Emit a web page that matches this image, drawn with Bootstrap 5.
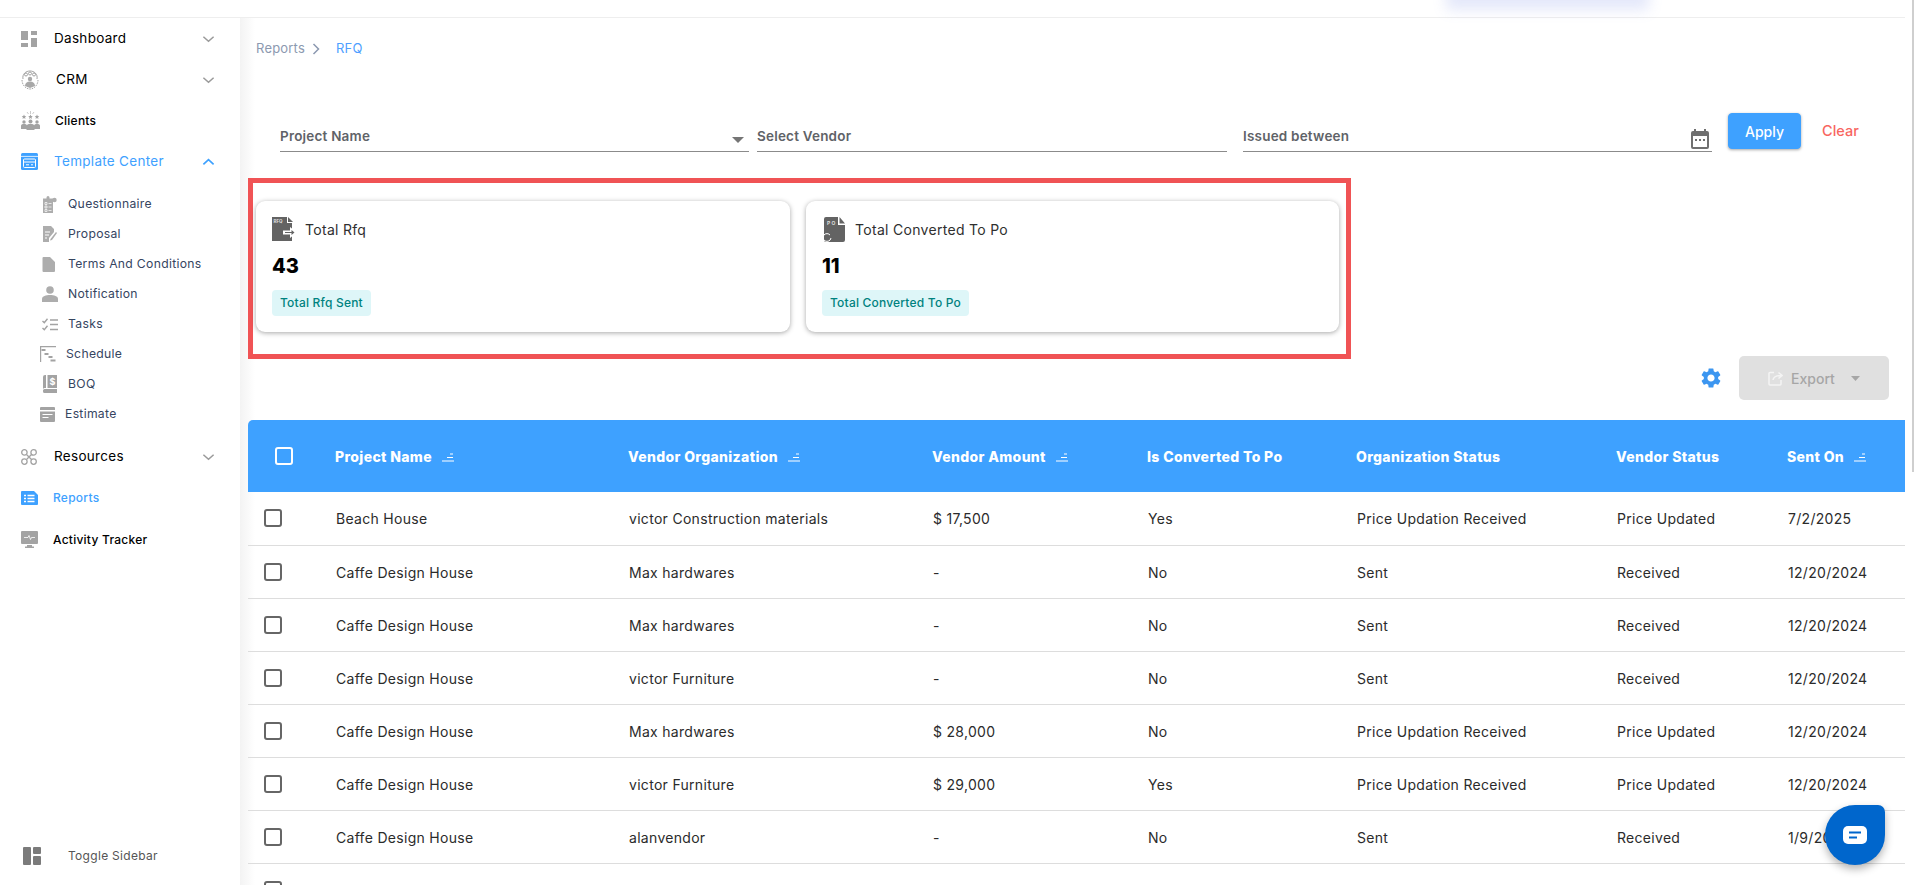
<!DOCTYPE html>
<html lang="en">
<head>
    <meta charset="UTF-8">
    <meta name="viewport" content="width=device-width, initial-scale=1">
    <title>RFQ Reports</title>
    <link href="https://cdn.jsdelivr.net/npm/bootstrap@5.3.0/dist/css/bootstrap.min.css" rel="stylesheet">
    <style>
        body { font-family: Inter, "Noto Sans", sans-serif; font-size: 13px; color: #2b2b2b; background: #fff; }
        .app-shell { height: 885px; overflow: hidden; position: relative; }
        .top-strip { height: 18px; margin-right: 14px; border-bottom: 1px solid #eeeeee; flex: none; }
        .top-glow { position: absolute; top: -20px; left: 1450px; width: 195px; height: 20px; box-shadow: 0 6px 14px 4px rgba(120, 140, 230, .2); }
        .scroll-thumb { position: absolute; top: 0; left: 1912px; width: 2px; height: 472px; background: #cfcfcf; }
        .body-row { min-height: 0; overflow: hidden; }

        /* sidebar */
        .side-rail { width: 240px; flex: none; background: #fff; padding-bottom: 19px; }
        .rail-item { height: 41px; flex: none; padding: 0 24px 0 21px; display: flex; align-items: center; color: #000; font-size: 13.5px; letter-spacing: .3px; }
        .rail-item.small-item { font-size: 12px; font-weight: 500; letter-spacing: .25px; }
        .rail-item.rail-low { height: 42px; }
        .rail-item.is-active { color: #3ea1ff; }
        .rail-icon { width: 33px; flex: none; display: flex; }
        .rail-chev { margin-left: auto; margin-right: 1px; }
        .rail-sub { padding: 7px 0 7px 42px; list-style: none; margin: 0; }
        .rail-sub li { height: 30px; display: flex; align-items: center; font-size: 12.2px; color: #36455f; letter-spacing: .3px; }
        .sub-icon { width: 26px; flex: none; display: flex; }
        .shift-r { margin-left: 2px; }
        .shift-r1 { margin-left: 1px; }
        .shift-l { margin-left: -1px; }
        .shift-l2 { margin-left: -2px; }
        .rail-toggle { margin-top: auto; padding-left: 23px; display: flex; align-items: center; font-size: 12px; color: #555; height: 20px; letter-spacing: .3px; flex: none; }
        .rail-toggle svg { margin-right: 27px; }

        /* main */
        .main-pane { flex: 1 1 auto; min-width: 0; padding: 21px 14px 0 8px; background: linear-gradient(90deg, #f3f3f3, #fff 15px); }
        .crumbs { height: 20px; padding-left: 8px; font-size: 13px; color: #8c99b0; letter-spacing: .2px; }
        .crumbs .crumb-now { color: #4f9fff; margin-left: 16px; }
        .crumbs svg { margin-left: 7px; }

        .filter-row { margin-top: 54px; padding-left: 32px; height: 39px; }
        .filter-field { height: 39px; width: 469px; border-bottom: 1.5px solid #8b8b8b; font-size: 13.5px; font-weight: 600; color: #5f6368; padding-bottom: 5px; letter-spacing: .2px; }
        .filter-field.mid-field { width: 470px; margin-left: 8px; }
        .filter-field.date-field { margin-left: 16px; padding-left: 0; }
        .caret-ico { margin: 0 5px 3px 0; }
        .cal-ico { margin: 0 3px -3px 0; }
        .btn-apply { width: 73px; height: 36px; margin-left: 16px; padding: 0; background: #3ea1ff; border-color: #3ea1ff; color: #fff; font-size: 14px; font-weight: 500; box-shadow: 0 1px 3px rgba(0, 0, 0, .35); border-radius: 4px; }
        .btn-clear { margin-left: 21px; color: #f8665f; font-size: 14.5px; font-weight: 500; height: 36px; line-height: 36px; }

        .red-frame { width: 1103px; height: 181px; margin-top: 26px; border: 5px solid #f05355; padding: 18px 0 0 3px; gap: 16px; }
        .stat-card { width: 534px; height: 131px; border: 0; border-radius: 9px; box-shadow: 0 1px 5px rgba(0, 0, 0, .35); padding: 16px; }
        .stat-card.card-b { width: 533px; }
        .stat-title { font-size: 14px; color: #2f2f2f; letter-spacing: .3px; }
        .stat-num { font-size: 20px; font-weight: 800; color: #000; line-height: 24px; margin-top: 12px; }
        .stat-chip { background: #def6f8; color: #00827f; font-size: 12px; font-weight: 500; padding: 0 8px; height: 26px; line-height: 26px; border-radius: 4px; margin-top: 12px; letter-spacing: .2px; }

        .tool-row { margin-top: -3px; padding-right: 16px; height: 44px; gap: 16px; }
        .btn-export, .btn-export:disabled { width: 150px; height: 44px; background: #e0e0e0; border: 0; border-radius: 5px; color: #a6a6a6; font-size: 14px; font-weight: 500; opacity: 1; }

        .rfq-table { margin: 20px 0 0; table-layout: fixed; width: 1657px; }
        .rfq-table thead th { background: #3ea1ff; color: #fff; height: 72px; font-size: 14px; font-weight: 800; padding: 0 0 0 15px; vertical-align: middle; border: 0; white-space: nowrap; letter-spacing: .35px; }
        .rfq-table thead th:first-child { border-top-left-radius: 5px; padding: 0 0 0 27px; }
        .rfq-table td { height: 53px; padding: 1px 0 0 16px; vertical-align: middle; font-size: 14px; color: #2b2b2b; border-bottom: 1px solid #dddddd; white-space: nowrap; letter-spacing: .3px; }
        .rfq-table td:first-child { padding: 0 0 0 16px; }
        .tick-box { display: block; width: 18px; height: 18px; margin: 0; border: 2px solid #666; border-radius: 3px; background: transparent; }
        thead .tick-box { border-color: #fff; }
        .sort-mark { margin-left: 10px; }

        .chat-bubble { position: absolute; left: 1825px; top: 805px; width: 60px; height: 60px; background: #0066cc; border-radius: 50% 7px 50% 50%; box-shadow: 0 4px 8px rgba(0, 0, 0, .3); }
    </style>
</head>
<body>
<svg width="0" height="0" class="d-block">
    <symbol id="chev-down" viewBox="0 0 14 8"><path d="M1.500 1.500 7 6.500l5.500-5" fill="none" stroke="#9a9a9a" stroke-width="1.600"/></symbol>
    <symbol id="sort-lines" viewBox="0 0 12 9"><path d="M8 1h3M5 4.500h6M0 8h12" stroke="#fff" stroke-width="1.100"/></symbol>
</svg>

<div class="app-shell d-flex flex-column">
    <div class="top-strip"></div>
    <div class="top-glow"></div>
    <div class="scroll-thumb"></div>

    <div class="body-row d-flex flex-grow-1">
        <!-- sidebar -->
        <aside class="side-rail d-flex flex-column">
            <div class="rail-item">
                <span class="rail-icon"><svg width="16" height="16" viewBox="0 0 16 16" fill="#a3a3a3"><rect x="0" y="0" width="7" height="9"/><rect x="0" y="12" width="7" height="4"/><rect x="10" y="0" width="6" height="4"/><rect x="10" y="7" width="6" height="9"/></svg></span>
                <span>Dashboard</span>
                <svg class="rail-chev" width="13" height="8"><use href="#chev-down"/></svg>
            </div>
            <div class="rail-item">
                <span class="rail-icon"><svg width="18" height="20" viewBox="0 0 18 20" fill="none" stroke="#a3a3a3" stroke-width="1"><path d="M2 9c-1-5 3-8 7-8s8 3 7 8"/><circle cx="5" cy="4.500" r="1.500"/><circle cx="9" cy="3.500" r="1.500"/><circle cx="13" cy="4.500" r="1.500"/><path d="M1 10c0 5 4 9 8 9s8-4 8-9" stroke-dasharray="1.500 1"/><circle cx="9" cy="9" r="2.200" fill="#a8a8a8" stroke="none"/><path d="M4 16c0-3 2-4.500 5-4.500s5 1.500 5 4.500l-5 2z" fill="#a8a8a8" stroke="none"/></svg></span>
                <span class="shift-r">CRM</span>
                <svg class="rail-chev" width="13" height="8"><use href="#chev-down"/></svg>
            </div>
            <div class="rail-item small-item">
                <span class="rail-icon"><svg width="19" height="19" viewBox="0 0 19 19" fill="#a3a3a3"><path d="M9.500 0v3M6 1l1.500 2M13 1l-1.500 2" stroke="#b5b5b5" stroke-width=".7"/><path d="m3 3.500.7 1.500 1.600.2-1.200 1.100.3 1.600L3 7l-1.400.9.300-1.600L.7 5.200l1.600-.2zM9.500 3.500l.7 1.500 1.600.2-1.200 1.100.3 1.600L9.500 7l-1.400.9.300-1.600-1.200-1.100 1.600-.2zM16 3.500l.7 1.500 1.600.2-1.200 1.100.3 1.600L16 7l-1.400.9.300-1.600-1.200-1.100 1.600-.2z"/><circle cx="3" cy="11" r="1.700"/><circle cx="9.500" cy="10.500" r="2"/><circle cx="16" cy="11" r="1.700"/><path d="M0 18v-3c0-1.500 1-2 3-2s3 .5 3 2v3zM13 18v-3c0-1.500 1-2 3-2s3 .5 3 2v3z"/><path d="M5.500 19v-3.500c0-2 1.500-2.500 4-2.500s4 .5 4 2.500V19z"/></svg></span>
                <span class="shift-r1">Clients</span>
            </div>
            <div class="rail-item is-active">
                <span class="rail-icon"><svg width="17" height="17" viewBox="0 0 17 17"><rect width="17" height="17" rx="1.500" fill="#3ea1ff"/><path d="M0 3.400h17" stroke="#fff" stroke-width=".8"/><rect x="2.500" y="6" width="12" height="8.500" rx="1" fill="none" stroke="#fff" stroke-width="1"/><path d="M3 9h11M5 11.800h3M10 11.800h2" stroke="#fff" stroke-width="1"/></svg></span>
                <span>Template Center</span>
                <svg class="rail-chev" width="13" height="8" viewBox="0 0 14 8"><path d="M1.500 6.500 7 1.500l5.500 5" fill="none" stroke="#3ea1ff" stroke-width="1.800"/></svg>
            </div>
            <ul class="rail-sub">
                <li><span class="sub-icon"><svg width="15" height="17" viewBox="0 0 15 17" fill="#adadad"><path d="M1 2.500h3.500V1.500a1.500 1.500 0 0 1 3 0v1H11V17H1z"/><path d="M3 6.500h2v2H3zM3 10h2v2H3zM3 13.500h2v2H3zM6.500 7.500h3M6.500 11h3M6.500 14.500h3" stroke="#fff" stroke-width=".7"/><circle cx="12.500" cy="4" r="2.200"/></svg></span>Questionnaire</li>
                <li><span class="sub-icon"><svg width="15" height="16" viewBox="0 0 15 16" fill="#adadad"><path d="M1 0h8l3 3v3l-5 6v4H1z"/><path d="M3 6h5M3 9h4M3 12h2" stroke="#fff" stroke-width="1"/><path d="m8.500 13 5.500-7 1 1-5 7-2 .5z"/></svg></span>Proposal</li>
                <li><span class="sub-icon"><svg width="13" height="15" viewBox="0 0 13 15" fill="#adadad"><path d="M1.500 0H8l5 5v9a1 1 0 0 1-1 1H1.500a1 1 0 0 1-1-1V1a1 1 0 0 1 1-1z"/></svg></span>Terms And Conditions</li>
                <li><span class="sub-icon"><svg width="16" height="16" viewBox="0 0 16 16" fill="#adadad"><circle cx="8" cy="4" r="3.800"/><path d="M0 16v-3c0-3 4-4 8-4s8 1 8 4v3z"/></svg></span>Notification</li>
                <li><span class="sub-icon"><svg width="16" height="13" viewBox="0 0 16 13" fill="none" stroke="#a3a3a3" stroke-width="1.400"><path d="m.5 3 1.800 1.800L5.500.8M.5 10l1.800 1.800 3.200-4M8 2h8M8 6.500h8M8 11.500h8"/></svg></span>Tasks</li>
                <li><span class="sub-icon shift-l2"><svg width="16" height="16" viewBox="0 0 16 16" fill="#a3a3a3"><path d="M0 0h16v1.200H1.200V16H0z"/><path d="M1.500 3h4v2h-4zM4.500 7h4v2h-4zM8.500 10h4v2h-4zM10.500 13.500h5v2h-5z"/></svg></span>Schedule</li>
                <li><span class="sub-icon"><svg width="16" height="18" viewBox="0 0 16 18" fill="#a3a3a3"><path d="M1 14V2a2 2 0 0 1 2-2h1v13H3a2 2 0 0 0-2 1zM5.500 0H15v13H5.500z"/><path d="M1 15.500a1.500 1.500 0 0 1 1.500-1.500H15v4H2.500A1.500 1.500 0 0 1 1 16.500z"/><text x="7.600" y="10" font-size="9" font-weight="700" fill="#fff" font-family="Inter, sans-serif">$</text></svg></span>BOQ</li>
                <li><span class="sub-icon shift-l2"><svg width="15" height="15" viewBox="0 0 15 15" fill="#a3a3a3"><path d="M1 0h13a1 1 0 0 1 1 1v2H0V1a1 1 0 0 1 1-1zM0 4.500h15V14a1 1 0 0 1-1 1H1a1 1 0 0 1-1-1z"/><path d="M2.500 7.500h10M2.500 10.500h6" stroke="#fff" stroke-width="1.200"/></svg></span><span class="shift-l">Estimate</span></li>
            </ul>
            <div class="rail-item">
                <span class="rail-icon"><svg width="16" height="16" viewBox="0 0 16 16" fill="none" stroke="#a3a3a3" stroke-width="1.300"><circle cx="3.400" cy="3.400" r="2.700"/><circle cx="12.600" cy="3.400" r="2.700"/><circle cx="3.400" cy="12.600" r="2.700"/><circle cx="12.600" cy="12.600" r="2.700"/><path d="m5.500 5.500 5 5M10.500 5.500l-5 5"/></svg></span>
                <span>Resources</span>
                <svg class="rail-chev" width="13" height="8"><use href="#chev-down"/></svg>
            </div>
            <div class="rail-item small-item is-active rail-low">
                <span class="rail-icon"><svg width="17" height="14" viewBox="0 0 17 14"><path d="M1 0h12l4 4v9a1 1 0 0 1-1 1H1a1 1 0 0 1-1-1V1a1 1 0 0 1 1-1z" fill="#3ea1ff"/><path d="M3 4.500h2M3 7.500h2M3 10.500h2M6.500 4.500h7M6.500 7.500h7M6.500 10.500h7" stroke="#fff" stroke-width="1.300"/></svg></span>
                <span class="shift-l">Reports</span>
            </div>
            <div class="rail-item small-item">
                <span class="rail-icon"><svg width="17" height="17" viewBox="0 0 17 17" fill="#a3a3a3"><rect width="17" height="13" rx="1"/><path d="M6 14h5v1.500H6zM4 15.500h9V17H4z"/><path d="M3 6.500h4l1-2 1.500 4 1-2h3.500" fill="none" stroke="#fff" stroke-width=".8"/></svg></span>
                <span class="shift-l">Activity Tracker</span>
            </div>
            <div class="rail-toggle">
                <svg width="18" height="18" viewBox="0 0 18 18" fill="#7b7b7b"><rect width="8" height="18" rx="1"/><rect x="10" width="8" height="7" rx="1"/><rect x="10" y="9" width="8" height="9" rx="1"/></svg>
                <span>Toggle Sidebar</span>
            </div>
        </aside>

        <!-- main content -->
        <main class="main-pane">
            <div class="crumbs d-flex align-items-center">
                <span>Reports</span>
                <svg width="8" height="12" viewBox="0 0 8 12"><path d="m1.500 1 5 5-5 5" fill="none" stroke="#8c99b0" stroke-width="1.500"/></svg>
                <span class="crumb-now">RFQ</span>
            </div>

            <div class="filter-row d-flex">
                <div class="filter-field d-flex align-items-end justify-content-between">
                    <span>Project Name</span>
                    <svg class="caret-ico" width="12" height="6" viewBox="0 0 12 6"><path d="M0 0h12L6 6z" fill="#757575"/></svg>
                </div>
                <div class="filter-field mid-field d-flex align-items-end"><span>Select Vendor</span></div>
                <div class="filter-field date-field d-flex align-items-end justify-content-between">
                    <span>Issued between</span>
                    <svg class="cal-ico" width="18" height="20" viewBox="0 0 18 20"><path d="M3 0h2v2h8V0h2v2h1a2 2 0 0 1 2 2v14a2 2 0 0 1-2 2H2a2 2 0 0 1-2-2V4a2 2 0 0 1 2-2h1z" fill="#707070"/><rect x="2" y="7" width="14" height="11" fill="#fff"/><path d="M4 10h2v2H4zM8 10h2v2H8zM12 10h2v2h-2z" fill="#707070"/></svg>
                </div>
                <button type="button" class="btn btn-apply">Apply</button>
                <span class="btn-clear">Clear</span>
            </div>

            <div class="red-frame d-flex">
                <div class="card stat-card">
                    <div class="d-flex align-items-center gap-2">
                        <svg width="25" height="25" viewBox="0 0 25 25"><path d="M0 0h15v6h5v18H0z" fill="#636363"/><path d="M16 0l5 5h-5z" fill="#636363"/><text x="1.500" y="6" font-size="4.500" font-weight="700" fill="#ddd" font-family="Inter, sans-serif">RFQ</text><path d="M11 13.500h7V10l7 5.500-7 5.500v-3.500h-7z" fill="#fff"/><path d="M13 15h6.500v-2l3 2.500-3 2.500v-2H13z" fill="#636363"/></svg>
                        <span class="stat-title">Total Rfq</span>
                    </div>
                    <div class="stat-num">43</div>
                    <div><span class="d-inline-block stat-chip">Total Rfq Sent</span></div>
                </div>
                <div class="card stat-card card-b">
                    <div class="d-flex align-items-center gap-2">
                        <svg width="25" height="25" viewBox="0 0 25 25"><path d="M4 0h12v8h7v15a2 2 0 0 1-2 2H4a2 2 0 0 1-2-2V2a2 2 0 0 1 2-2z" fill="#636363"/><path d="M17.500 0 23 6.500h-5.500z" fill="#636363"/><text x="5" y="7.500" font-size="5" font-weight="700" fill="#ddd" font-family="Inter, sans-serif">P O</text><path d="M1 20a4 4 0 0 1 7-2M9 21a4 4 0 0 1-7 2" fill="none" stroke="#fff" stroke-width="1"/></svg>
                        <span class="stat-title">Total Converted To Po</span>
                    </div>
                    <div class="stat-num">11</div>
                    <div><span class="d-inline-block stat-chip">Total Converted To Po</span></div>
                </div>
            </div>

            <div class="tool-row d-flex justify-content-end align-items-center">
                <svg width="24" height="24" viewBox="0 0 24 24" fill="#3c96f0"><path d="M19.140 12.940c.04-.3.06-.61.06-.94 0-.32-.02-.64-.07-.94l2.030-1.580a.49.49 0 0 0 .12-.61l-1.920-3.320a.488.488 0 0 0-.59-.22l-2.390.96c-.5-.38-1.030-.7-1.620-.94l-.36-2.540a.484.484 0 0 0-.48-.41h-3.840c-.24 0-.43.17-.47.41l-.36 2.540c-.59.24-1.130.57-1.620.94l-2.390-.96c-.22-.08-.47 0-.59.22L2.740 8.870c-.12.21-.08.47.12.61l2.030 1.580c-.05.3-.09.63-.09.94s.02.64.07.94l-2.030 1.580a.49.49 0 0 0-.12.61l1.920 3.320c.12.22.37.29.59.22l2.390-.96c.5.38 1.030.7 1.620.94l.36 2.540c.05.24.24.41.48.41h3.840c.24 0 .44-.17.47-.41l.36-2.540c.59-.24 1.130-.56 1.620-.94l2.390.96c.22.08.47 0 .59-.22l1.920-3.320c.12-.22.07-.47-.12-.61l-2.010-1.580zM12 15.600c-1.980 0-3.600-1.620-3.600-3.600s1.620-3.600 3.600-3.600 3.600 1.620 3.600 3.600-1.620 3.600-3.600 3.600z"/></svg>
                <button type="button" class="btn btn-export d-flex align-items-center justify-content-center gap-2" disabled>
                    <svg width="15" height="15" viewBox="0 0 15 15" fill="none" stroke="#f4f4f4" stroke-width="1.500"><path d="M6 1.500H2a1 1 0 0 0-1 1V13a1 1 0 0 0 1 1h10a1 1 0 0 0 1-1V9"/><path d="M5 9c.5-3 3-4.500 8-4.500M10.500 1.500l3.500 3-3.500 3"/></svg>
                    <span>Export</span>
                    <svg class="ms-2" width="9" height="5" viewBox="0 0 9 5"><path d="M0 0h9L4.500 5z" fill="#a6a6a6"/></svg>
                </button>
            </div>

            <table class="table rfq-table">
                <colgroup>
                    <col class="c-w1"><col class="c-w2"><col class="c-w3"><col class="c-w4"><col class="c-w5"><col class="c-w6"><col class="c-w7"><col class="c-w8">
                </colgroup>
                <thead>
                <tr>
                    <th><span class="tick-box"></span></th>
                    <th>Project Name<svg class="sort-mark" width="12" height="9"><use href="#sort-lines"/></svg></th>
                    <th>Vendor Organization<svg class="sort-mark" width="12" height="9"><use href="#sort-lines"/></svg></th>
                    <th>Vendor Amount<svg class="sort-mark" width="12" height="9"><use href="#sort-lines"/></svg></th>
                    <th>Is Converted To Po</th>
                    <th>Organization Status</th>
                    <th>Vendor Status</th>
                    <th>Sent On<svg class="sort-mark" width="12" height="9"><use href="#sort-lines"/></svg></th>
                </tr>
                </thead>
                <tbody id="rfqRows"></tbody>
            </table>
        </main>
    </div>

    <div class="chat-bubble d-flex align-items-center justify-content-center">
        <svg width="24" height="18" viewBox="0 0 24 18"><rect width="24" height="18" rx="5" fill="#fff"/><path d="M6 6.500h12M6 11.500h8" stroke="#0066cc" stroke-width="2"/></svg>
    </div>
</div>

<script src="https://cdn.jsdelivr.net/npm/bootstrap@5.3.0/dist/js/bootstrap.bundle.min.js"></script>
<script>
    const rows = [
        ['Beach House', 'victor Construction materials', '$ 17,500', 'Yes', 'Price Updation Received', 'Price Updated', '7/2/2025'],
        ['Caffe Design House', 'Max hardwares', '-', 'No', 'Sent', 'Received', '12/20/2024'],
        ['Caffe Design House', 'Max hardwares', '-', 'No', 'Sent', 'Received', '12/20/2024'],
        ['Caffe Design House', 'victor Furniture', '-', 'No', 'Sent', 'Received', '12/20/2024'],
        ['Caffe Design House', 'Max hardwares', '$ 28,000', 'No', 'Price Updation Received', 'Price Updated', '12/20/2024'],
        ['Caffe Design House', 'victor Furniture', '$ 29,000', 'Yes', 'Price Updation Received', 'Price Updated', '12/20/2024'],
        ['Caffe Design House', 'alanvendor', '-', 'No', 'Sent', 'Received', '1/9/2025'],
        ['Caffe Design House', 'Max hardwares', '-', 'No', 'Sent', 'Received', '12/20/2024']
    ];
    const body = document.getElementById('rfqRows');
    rows.forEach(row => {
        const tr = document.createElement('tr');
        tr.innerHTML = '<td><span class="tick-box"></span></td>' + row.map(v => `<td>${v}</td>`).join('');
        body.appendChild(tr);
    });
    // column widths read off the header
    [72, 293, 304, 215, 209, 260, 171, 133].forEach((w, i) => {
        document.querySelector('.c-w' + (i + 1)).style.width = w + 'px';
    });
</script>
</body>
</html>
